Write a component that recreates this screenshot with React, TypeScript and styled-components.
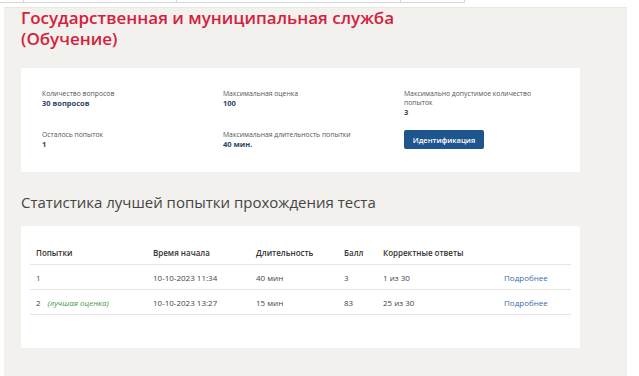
import React from 'react';
import styled, { createGlobalStyle } from 'styled-components';

const GlobalStyle = createGlobalStyle`
  html, body {
    margin: 0;
    padding: 0;
    background: #ffffff;
    font-family: "Open Sans", "Liberation Sans", sans-serif;
  }
`;

const TopFragment = styled.div`
  display: flex;
  height: 7px;
`;

const FragmentCell = styled.div<{ w: number }>`
  width: ${p => p.w}px;
  height: 2px;
  border-right: 1px solid #d6d6d6;
  border-bottom: 1px solid #d6d6d6;
`;

const Page = styled.div`
  margin-left: 4px;
  width: 623px;
  min-height: 369px;
  box-sizing: border-box;
  background: #f2f1ee;
  border-top: 1px solid #e8e7e4;
  padding: 0 47px 20px 17px;
`;

const Title = styled.h1`
  margin: -1px 0 0;
  font-size: 17px;
  line-height: 21px;
  font-weight: 600;
  color: #d5203c;
`;

const Card = styled.div`
  background: #ffffff;
  border-radius: 2px;
`;

const InfoCard = styled(Card)`
  margin-top: 19px;
  padding: 21px 21px 14px;
  display: grid;
  grid-template-columns: 181px 181px 1fr;
  row-gap: 13px;
`;

const InfoItem = styled.div`
  display: flex;
  flex-direction: column;
  min-height: 28px;
`;

const Label = styled.span`
  font-size: 6.8px;
  line-height: 9px;
  color: #555;
  max-width: 150px;
`;

const Value = styled.span`
  font-size: 7.5px;
  line-height: 10px;
  font-weight: 700;
  color: #2c466a;
`;

const IdButton = styled.button`
  align-self: flex-start;
  width: 80px;
  height: 19px;
  border: none;
  border-radius: 2px;
  background: #1f558e;
  color: #fff;
  font-family: inherit;
  font-size: 7.5px;
  font-weight: 600;
  padding: 0;
  cursor: pointer;
`;

const SectionHeading = styled.h2`
  margin: 19px 0 0;
  font-size: 15px;
  line-height: 22px;
  font-weight: 400;
  color: #454545;
`;

const TableCard = styled(Card)`
  margin-top: 13px;
  padding: 15px 9px 33px;
`;

const Table = styled.table`
  width: 100%;
  border-collapse: collapse;
  font-size: 8px;
  color: #444;
`;

const Th = styled.th<{ w?: number }>`
  text-align: left;
  font-weight: 600;
  color: #333;
  padding: 0 6px;
  height: 23px;
  width: ${p => (p.w ? `${p.w}px` : 'auto')};
  border-bottom: 1px solid #e6e6e6;
`;

const Td = styled.td`
  padding: 0 6px;
  height: 24px;
  border-bottom: 1px solid #e6e6e6;
  white-space: nowrap;
`;

const Best = styled.i`
  margin-left: 7px;
  color: #3e9a45;
`;

const MoreLink = styled.a`
  color: #3a6ea8;
  text-decoration: none;
`;

const info = [
  { label: 'Количество вопросов', value: '30 вопросов' },
  { label: 'Максимальная оценка', value: '100' },
  { label: 'Максимально допустимое количество попыток', value: '3' },
  { label: 'Осталось попыток', value: '1' },
  { label: 'Максимальная длительность попытки', value: '40 мин.' },
];

const attempts = [
  { n: '1', best: false, start: '10-10-2023 11:34', dur: '40 мин', score: '3', correct: '1 из 30' },
  { n: '2', best: true, start: '10-10-2023 13:27', dur: '15 мин', score: '83', correct: '25 из 30' },
];

const App: React.FC = () => {
  return (
    <>
      <GlobalStyle />
      <TopFragment>
        <FragmentCell w={23} />
        <FragmentCell w={152} />
        <FragmentCell w={223} />
        <FragmentCell w={63} />
      </TopFragment>
      <Page>
        <Title>
          Государственная и муниципальная служба
          <br />
          (Обучение)
        </Title>
        <InfoCard>
          {info.map((item, i) => (
            <InfoItem key={i}>
              <Label>{item.label}</Label>
              <Value>{item.value}</Value>
            </InfoItem>
          ))}
          <IdButton>Идентификация</IdButton>
        </InfoCard>
        <SectionHeading>Статистика лучшей попытки прохождения теста</SectionHeading>
        <TableCard>
          <Table>
            <thead>
              <tr>
                <Th w={105}>Попытки</Th>
                <Th w={91}>Время начала</Th>
                <Th w={76}>Длительность</Th>
                <Th w={27}>Балл</Th>
                <Th w={109}>Корректные ответы</Th>
                <Th />
              </tr>
            </thead>
            <tbody>
              {attempts.map(a => (
                <tr key={a.n}>
                  <Td>
                    {a.n}
                    {a.best && <Best>(лучшая оценка)</Best>}
                  </Td>
                  <Td>{a.start}</Td>
                  <Td>{a.dur}</Td>
                  <Td>{a.score}</Td>
                  <Td>{a.correct}</Td>
                  <Td>
                    <MoreLink href="#">Подробнее</MoreLink>
                  </Td>
                </tr>
              ))}
            </tbody>
          </Table>
        </TableCard>
      </Page>
    </>
  );
};

export default App;
